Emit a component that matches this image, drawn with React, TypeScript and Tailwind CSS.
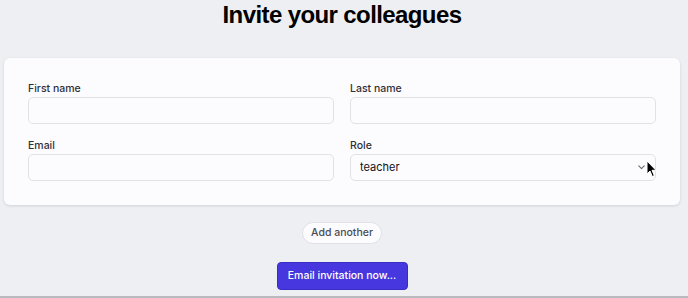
import React from 'react';

const Field: React.FC<{ label: string; children: React.ReactNode }> = ({ label, children }) => (
  <div className="flex flex-col">
    <label className="text-[10.5px] leading-[14px] font-medium text-[#2f2f37] mb-px">{label}</label>
    {children}
  </div>
);

const inputCls = 'block h-[27px] w-full rounded-[5px] border border-[#e2e1e6] bg-[#fcfbfe] px-[9px] py-0 text-[10.5px] leading-[25px] text-[#111116] outline-none';

const App: React.FC = () => {
  return (
    <div className="h-[298px] bg-[#eeeff2] border-b-2 border-[#b9b9bd] font-['Inter','Noto_Sans',sans-serif] overflow-hidden">
      <div className="w-[684px] flex flex-col items-center">
        <h1 className="font-['Liberation_Sans','Arial',sans-serif] text-[24px] leading-[30px] font-bold tracking-tight text-black">Invite your colleagues</h1>

        <div className="mt-[28px] mx-[4px] self-stretch rounded-[6px] bg-[#fcfbfe] shadow-[0_1px_3px_rgba(0,0,0,0.12)] p-6">
          <div className="grid grid-cols-2 gap-x-4 gap-y-[15px]">
            <Field label="First name"><input className={inputCls} /></Field>
            <Field label="Last name"><input className={inputCls} /></Field>
            <Field label="Email"><input className={inputCls} /></Field>
            <Field label="Role">
              <div className="relative h-[27px]">
                <select defaultValue="teacher" className={inputCls + ' appearance-none text-[11px]'}>
                  <option value="teacher">teacher</option>
                  <option value="admin">admin</option>
                </select>
                <svg className="absolute right-[11px] top-[11px] pointer-events-none" width="7" height="5" viewBox="0 0 7 5" fill="none">
                  <path d="M0.8 0.8 L3.5 3.6 L6.2 0.8" stroke="#6b6b73" strokeWidth="1.1" strokeLinecap="round" strokeLinejoin="round" />
                </svg>
                {/* mouse cursor captured in the screenshot */}
                <svg className="absolute right-[-1px] top-[6px] pointer-events-none" width="11" height="18" viewBox="0 0 11 18">
                  <path d="M1 1 L1 14 L4 11 L6.3 16.5 L8.3 15.6 L6 10.3 L10 10.3 Z" fill="#000" stroke="#fff" strokeWidth="1" strokeLinejoin="round" />
                </svg>
              </div>
            </Field>
          </div>
        </div>

        <button className="mt-[17px] h-[22px] px-[8px] rounded-full border border-[#e2e1e6] bg-[#fcfbfe] text-[10.5px] font-medium text-[#4b4b55]">Add another</button>

        <button className="mt-[18px] h-[28px] w-[131px] rounded-[4px] bg-[#4637de] border border-[#3a2dc4] text-[10.5px] font-medium text-white">Email invitation now...</button>
      </div>
    </div>
  );
};

export default App;
